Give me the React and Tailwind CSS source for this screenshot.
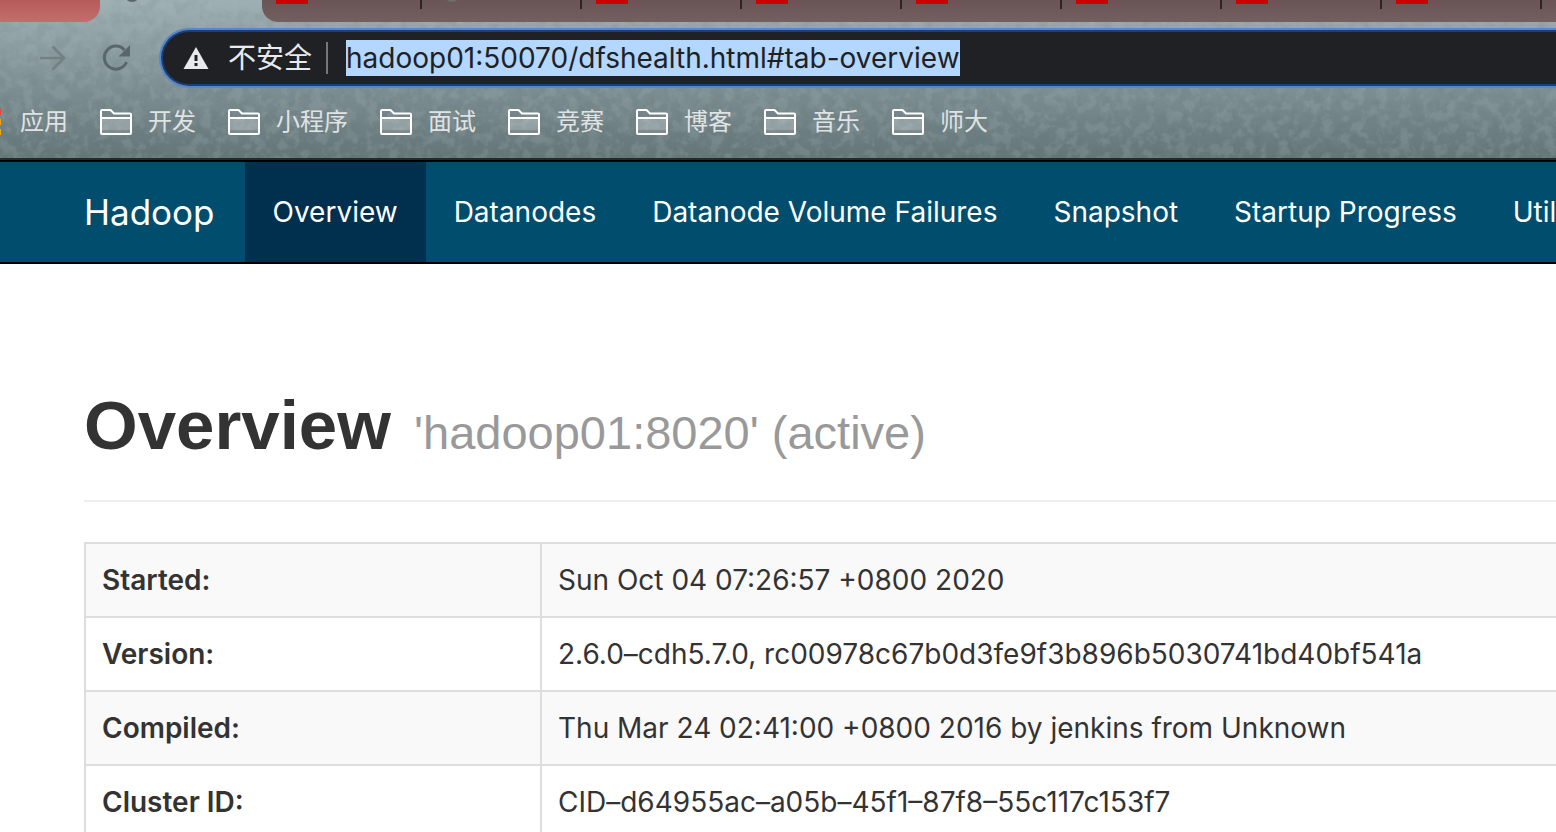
import React from "react";

const tabs = ["mark", "circle", "mark", "mark", "mark", "mark", "mark", "mark", "mark"];
const bookmarks = ["开发", "小程序", "面试", "竞赛", "博客", "音乐", "师大"];
const navItems = ["Overview", "Datanodes", "Datanode Volume Failures", "Snapshot", "Startup Progress", "Utilities"];
const details = [
  ["Started:", "Sun Oct 04 07:26:57 +0800 2020"],
  ["Version:", "2.6.0–cdh5.7.0, rc00978c67b0d3fe9f3b896b5030741bd40bf541a"],
  ["Compiled:", "Thu Mar 24 02:41:00 +0800 2016 by jenkins from Unknown"],
  ["Cluster ID:", "CID–d64955ac–a05b–45f1–87f8–55c117c153f7"],
];

function StoneTexture() {
  return (
    <svg className="absolute inset-0 size-full" aria-hidden="true">
      <filter id="stone-light" x="0" y="0" width="100%" height="100%" colorInterpolationFilters="sRGB">
        <feTurbulence type="fractalNoise" baseFrequency="0.09" numOctaves="5" seed="4" />
        <feColorMatrix values="0 0 0 0 0.66  0 0 0 0 0.72  0 0 0 0 0.72  5 0 0 0 -2.3" />
      </filter>
      <filter id="stone-dark" x="0" y="0" width="100%" height="100%" colorInterpolationFilters="sRGB">
        <feTurbulence type="fractalNoise" baseFrequency="0.08" numOctaves="5" seed="9" />
        <feColorMatrix values="0 0 0 0 0.35  0 0 0 0 0.43  0 0 0 0 0.41  0 4 0 0 -1.8" />
      </filter>
      <rect width="100%" height="100%" filter="url(#stone-light)" opacity="0.2" />
      <rect width="100%" height="100%" filter="url(#stone-dark)" opacity="0.1" />
    </svg>
  );
}

function BackIcon() {
  return (
    <svg width="28" height="28" viewBox="0 0 28 28" fill="none" stroke="#5a6668" strokeWidth="3">
      <path d="M27 14H3M14 3L3 14l11 11" />
    </svg>
  );
}

function ForwardIcon() {
  return (
    <svg width="28" height="28" viewBox="0 0 28 28" fill="none" stroke="#738183" strokeWidth="2.6">
      <path d="M1 14h24M13.5 2.5L25 14 13.5 25.500" />
    </svg>
  );
}

function ReloadIcon() {
  return (
    <svg width="32" height="28" viewBox="0 0 32 28" fill="none">
      <path d="M25.500 18A11.500 11.500 0 1 1 23.500 6" stroke="#59676a" strokeWidth="3" />
      <path d="M29 1v11.500H17.500z" fill="#59676a" />
    </svg>
  );
}

function WarningIcon() {
  return (
    <svg width="26" height="24" viewBox="0 0 26 24">
      <path d="M13 1L25.500 23H.5z" fill="#e8eaed" />
      <path d="M11.500 9h3v6h-3zM11.500 17h3v3h-3z" fill="#202124" />
    </svg>
  );
}

function FolderIcon() {
  return (
    <svg width="32" height="26" viewBox="0 0 32 26">
      <path d="M1 8h30v16.500H1z" fill="#fff" fillOpacity="0.25" />
      <path d="M2 21h28v3H2z" fill="#67767a" fillOpacity="0.5" />
      <path d="M1 24V2q0-1 1-1h8.500l3.500 3.500h16q1 0 1 1V24q0 1-1 1H2q-1 0-1-1zM1 9h30" fill="none" stroke="#fff" strokeWidth="2" />
    </svg>
  );
}

function AppsIcon() {
  return (
    <svg width="26" height="26" viewBox="0 0 26 26">
      {[["#f44336", 0], ["#f5a100", 10], ["#f5a100", 20]].map(([fill, y]) => (
        <g key={y} fill={fill}>
          <rect x="0" y={y} width="6" height="6" />
          <rect x="10" y={y} width="6" height="6" />
          <rect x="19" y={y} width="6" height="6" />
        </g>
      ))}
    </svg>
  );
}

function TabStrip() {
  return (
    <div className="flex h-[22px] overflow-hidden">
      <div className="h-full w-[100px] shrink-0 rounded-br-[16px] bg-linear-to-b from-[#b55c5b] to-[#c56d6c]" />
      <div className="w-[162px] shrink-0 pl-6">
        <div className="-mt-3.5 size-4 rounded-full bg-[#5d6769]" />
      </div>
      <div className="flex min-w-0 flex-1 overflow-hidden rounded-bl-[16px] bg-linear-to-b from-[#695556] to-[#745f60]">
        {tabs.map((kind, i) => (
          <div key={i} className="flex w-40 shrink-0 items-start justify-between pl-3.5">
            {kind === "mark" ? (
              <div className="h-1 w-8 bg-[#cc0000]" />
            ) : (
              <div className="-mt-3.5 ml-2 size-4 rounded-full bg-[#6f6f6e]" />
            )}
            <div className="h-[9px] w-0.5 bg-[#262626]" />
          </div>
        ))}
      </div>
    </div>
  );
}

function Browser() {
  return (
    <header className="relative overflow-hidden border-b-2 border-[#262a2b] bg-linear-to-b from-[#9fb0b4] via-[#819297] to-[#657679] font-[Inter,'Noto_Sans_CJK_SC',sans-serif]">
      <StoneTexture />
      <div className="relative">
        <TabStrip />
        <div className="flex items-center pt-1.5">
          <div className="-ml-[27px] flex w-[186px] shrink-0 items-center">
            <button type="button" aria-label="Back"><BackIcon /></button>
            <button type="button" aria-label="Forward" className="ml-[38px]"><ForwardIcon /></button>
            <button type="button" aria-label="Reload" className="ml-[34px]"><ReloadIcon /></button>
          </div>
          <div className="flex h-[60px] flex-1 rounded-l-full border-y-2 border-l-2 border-[#5787cb]">
            <div className="flex min-w-0 flex-1 items-center rounded-l-full border-y-2 border-l-2 border-[#193f7c] bg-[#202124] pl-5">
              <WarningIcon />
              <label htmlFor="address" className="ml-[19px] shrink-0 text-[28px] leading-9 text-[#e8eaed]">不安全</label>
              <span className="ml-3.5 h-8 w-0.5 shrink-0 bg-[#767779]" />
              <input
                id="address"
                type="text"
                defaultValue="hadoop01:50070/dfshealth.html#tab-overview"
                className="ml-[18px] h-9 field-sizing-content bg-[#b3d7ff] text-[28px] leading-9 text-[#202124] outline-none"
              />
            </div>
          </div>
        </div>
        <nav aria-label="Bookmarks" className="-ml-6 flex h-[70px] items-center gap-8 pb-0.5 text-2xl text-[#e0e3e4]">
          <a href="#apps" className="flex shrink-0 items-center gap-[18px]"><AppsIcon />应用</a>
          {bookmarks.map((name) => (
            <a key={name} href={"#" + name} className="flex shrink-0 items-center gap-4"><FolderIcon />{name}</a>
          ))}
        </nav>
      </div>
    </header>
  );
}

export default function App() {
  return (
    <div className="h-screen overflow-hidden bg-white font-[Inter,'Noto_Sans_CJK_SC',sans-serif] text-[#333333]">
      <Browser />
      <nav aria-label="Main" className="flex items-stretch overflow-hidden border-y-2 border-black bg-[#004d6e] pl-[84px] text-[28px] leading-10 whitespace-nowrap text-white">
        <a href="#top" className="shrink-0 py-[30px] pr-[30px] text-[35px]">Hadoop</a>
        {navItems.map((item, i) => (
          <a
            key={item}
            href={"#" + item}
            className={i === 0 ? "shrink-0 bg-[#00304d] px-7 py-[30px]" : "shrink-0 px-7 py-[30px]"}
          >
            {item}
          </a>
        ))}
      </nav>
      <main className="pt-[122px] pl-[84px]">
        <div className="border-b-2 border-[#eeeeee] pb-[27px]">
          <h1 className="font-['Liberation_Sans',Arial,sans-serif] text-[69px] leading-20 font-bold whitespace-nowrap">
            Overview <small className="ml-1 text-[47px] font-normal text-[#999999]">'hadoop01:8020' (active)</small>
          </h1>
        </div>
        <table className="mt-10 w-full border-collapse text-[28px] leading-10">
          <tbody>
            {details.map(([name, value]) => (
              <tr key={name} className="odd:bg-[#f9f9f9]">
                <th scope="row" className="w-[456px] border-2 border-[#dddddd] px-4 py-4 text-left font-semibold">{name}</th>
                <td className="border-y-2 border-[#dddddd] px-4 py-4 whitespace-nowrap">{value}</td>
              </tr>
            ))}
          </tbody>
        </table>
      </main>
    </div>
  );
}
